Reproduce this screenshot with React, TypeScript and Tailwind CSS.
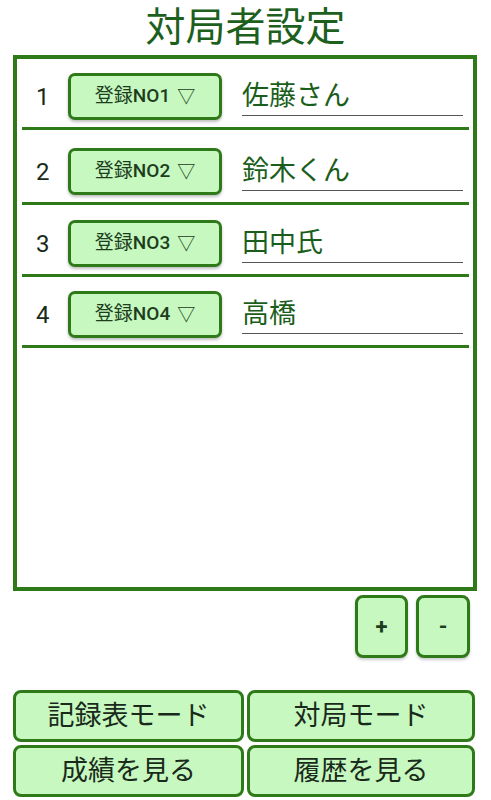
import React from "react";

const font = { fontFamily: "Roboto, 'Noto Sans CJK JP', sans-serif" };

const rows = [
  { n: "1", no: "NO1", name: "佐藤さん", pt: "pt-[14px]" },
  { n: "2", no: "NO2", name: "鈴木くん", pt: "pt-[18px]" },
  { n: "3", no: "NO3", name: "田中氏", pt: "pt-[15px]" },
  { n: "4", no: "NO4", name: "高橋", pt: "pt-[14px]" },
];

export default function App() {
  return (
    <div
      className="w-[491px] h-[800px] bg-white overflow-hidden flex flex-col"
      style={font}
    >
      <div className="h-[55px] flex items-center justify-center text-[40px] leading-[55px] text-[#1d5f1d] font-normal">
        対局者設定
      </div>
      <div className="ml-[13px] w-[464px] h-[536px] border-[4px] border-[#2f7a18] pl-[5px] pr-[4px] flex flex-col">
        {rows.map((r) => (
          <div key={r.n} className={`flex flex-col ${r.pt}`}>
            <div className="flex items-center h-[47px]">
              <div className="w-[46px] pl-[14px] text-[24px] text-[#1a2a1a]">{r.n}</div>
              <div className="w-[154px] h-[47px] rounded-[7px] border-[3px] border-[#2f7a18] bg-[#c6f8c0] shadow-[0_2px_3px_rgba(0,0,0,0.25)] flex items-center justify-center text-[19px] text-[#1d3d1d] font-normal">
                登録<span className="font-medium">{r.no}</span>
                <span className="ml-[7px] text-[18px] font-normal">▽</span>
              </div>
              <div className="ml-[20px] w-[221px] h-[47px] relative">
                <div className="absolute left-0 top-[5px] text-[27px] leading-[36px] text-[#1b5e1b]">
                  {r.name}
                </div>
                <div className="absolute left-0 right-0 top-[42px] h-[1px] bg-[#555]" />
              </div>
            </div>
            <div className="h-[7px]" />
            <div className="h-[3px] bg-[#2f7a18]" />
          </div>
        ))}
      </div>
      <div className="flex justify-end gap-[8px] pr-[21px] mt-[4px]">
        <div className="w-[53px] h-[63px] rounded-[8px] border-[3px] border-[#2f7a18] bg-[#c6f8c0] shadow-[0_2px_3px_rgba(0,0,0,0.2)] flex items-center justify-center text-[22px] font-bold text-[#1d3d1d]">
          +
        </div>
        <div className="w-[54px] h-[63px] rounded-[8px] border-[3px] border-[#2f7a18] bg-[#c6f8c0] shadow-[0_2px_3px_rgba(0,0,0,0.2)] flex items-center justify-center text-[22px] font-bold text-[#1d3d1d]">
          -
        </div>
      </div>
      <div className="mt-[32px] ml-[13px] w-[462px] grid grid-cols-[231px_228px] gap-x-[3px] gap-y-[3px]">
        {["記録表モード", "対局モード", "成績を見る", "履歴を見る"].map((t) => (
          <div
            key={t}
            className="h-[52px] rounded-[8px] border-[3px] border-[#2f7a18] bg-[#c6f8c0] flex items-center justify-center text-[27px] text-[#1a2a1a]"
          >
            {t}
          </div>
        ))}
      </div>
    </div>
  );
}
